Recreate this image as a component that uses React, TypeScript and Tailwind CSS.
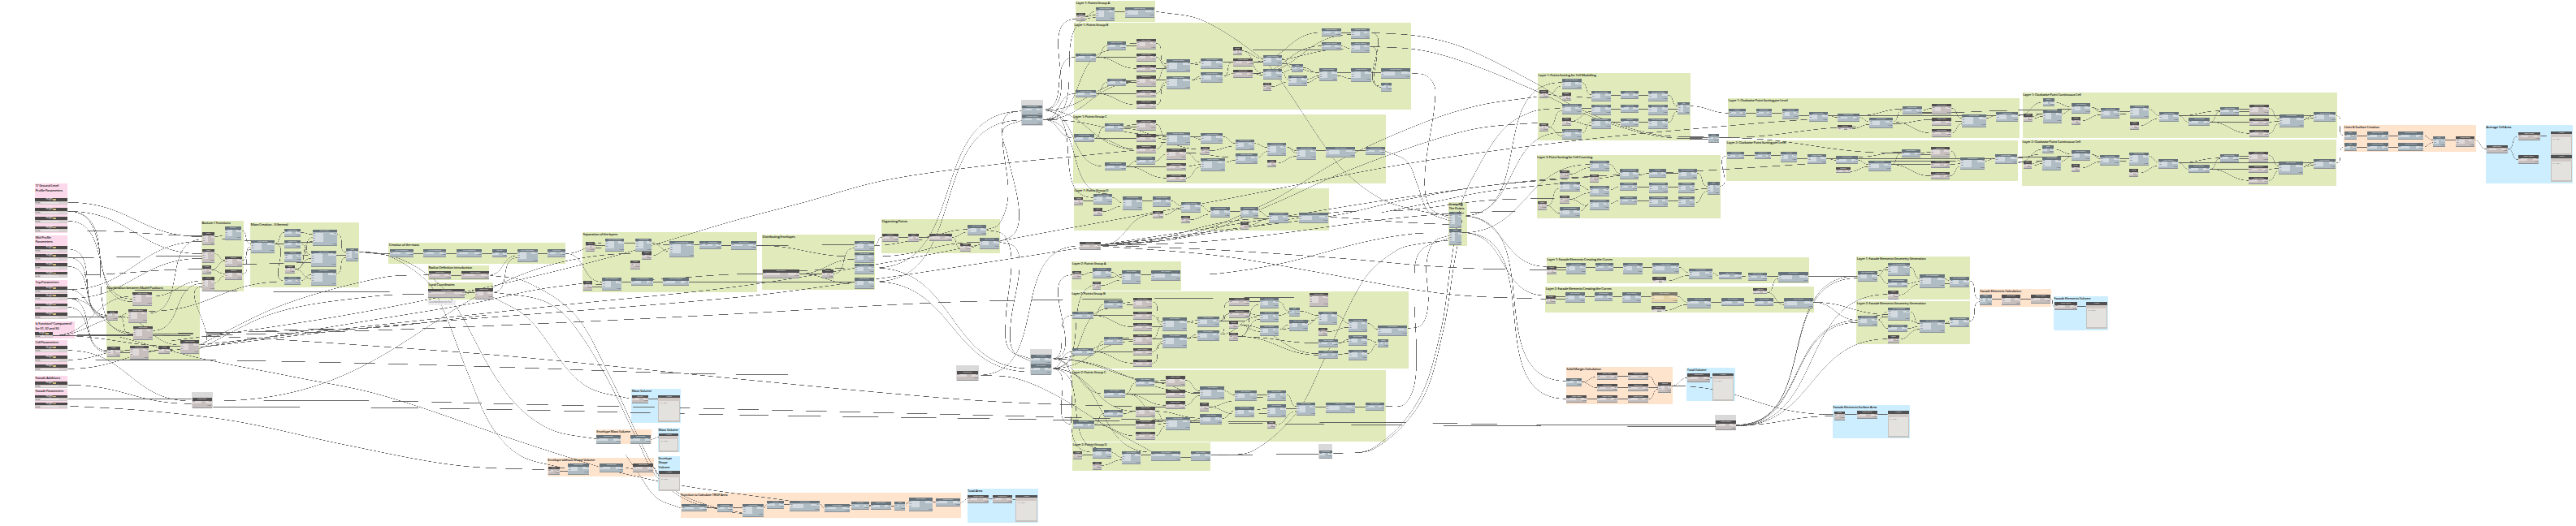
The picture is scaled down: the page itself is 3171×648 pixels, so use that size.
import React from "react";

type Kind = "pink" | "green" | "orange" | "blue" | "gray";
type NodeKind = "s" | "w" | "p" | "o" | "y" | "n";
type Group = [Kind, number, number, number, number, string];
type NodeDef = [NodeKind, number, number, number, number];

interface Section {
  ox: number;
  oy: number;
  sx: number;
  sy: number;
  groups: Group[];
  nodes: NodeDef[];
  wires: number[][];
}

const section = (
  ox: number,
  oy: number,
  sx: number,
  sy: number,
  groups: Group[],
  nodes: NodeDef[],
  wires: number[][],
): Section => ({ ox, oy, sx, sy, groups, nodes, wires });

const sliders = [102, 138, 171, 206, 279, 309, 342, 374, 429, 457, 491, 525, 649, 684, 717, 780, 830, 857];

const sections: Section[] = [
  // Input parameters, profile coordinates and mass control
  section(30, 210, 3, 3,
    [
      ["pink", 39, 49, 121, 183, "'V' Ground Level\nProfile Parameters"],
      ["pink", 39, 240, 121, 157, "Mid Profile\nParameters"],
      ["pink", 39, 404, 121, 144, "Top Parameters"],
      ["pink", 39, 559, 147, 62, "Is Function? Component?\nfor S1, S2 and S3"],
      ["pink", 39, 627, 121, 114, "Cell Parameters"],
      ["pink", 39, 758, 121, 46, "Facade Additions"],
      ["pink", 39, 808, 121, 75, "Facade Parameters"],
      ["green", 654, 186, 156, 260, "Bottom 1 Functions"],
      ["green", 835, 192, 401, 240, "Mass Creation - 3 General"],
      ["green", 302, 427, 346, 275, "Coordination between Model Positions"],
      ["gray", 617, 819, 80, 60, ""],
    ],
    [
      ...sliders.map((y): NodeDef => ["p", 40, y, 118, 23]),
      ["p", 40, 597, 65, 20],
      ["w", 657, 229, 45, 47], ["s", 740, 208, 60, 49], ["w", 657, 291, 45, 50], ["w", 740, 317, 64, 40],
      ["w", 657, 352, 34, 32], ["w", 740, 367, 64, 38], ["w", 657, 394, 46, 52],
      ["s", 837, 257, 86, 48], ["s", 961, 215, 58, 31], ["s", 961, 257, 58, 31], ["s", 961, 300, 61, 38],
      ["w", 963, 350, 36, 31], ["s", 961, 393, 58, 29], ["s", 1064, 219, 90, 60], ["s", 1059, 296, 92, 60],
      ["s", 1059, 367, 92, 60], ["s", 1188, 287, 46, 48],
      ["w", 400, 449, 72, 51], ["w", 383, 513, 71, 50], ["w", 402, 576, 72, 50], ["w", 305, 518, 40, 37],
      ["w", 307, 652, 46, 38], ["w", 390, 648, 69, 51], ["w", 496, 649, 42, 29], ["w", 576, 628, 68, 51],
      ["w", 620, 841, 72, 37],
    ],
    [
      [160, 118, 657, 245], [160, 151, 657, 308], [160, 151, 400, 485], [160, 187, 400, 475], [160, 222, 740, 243],
      [160, 151, 402, 605], [160, 291, 305, 535], [160, 322, 305, 541], [160, 355, 305, 546], [160, 322, 657, 316],
      [160, 387, 657, 365], [160, 440, 657, 262], [160, 440, 305, 535], [160, 473, 657, 325], [160, 473, 307, 665],
      [160, 505, 307, 671], [160, 473, 402, 600], [160, 540, 305, 539], [105, 610, 400, 465], [105, 610, 402, 609],
      [105, 610, 576, 650], [105, 610, 383, 540], [160, 665, 617, 852], [160, 700, 390, 665], [160, 733, 576, 660],
      [160, 793, 617, 862], [160, 844, 617, 844], [345, 540, 383, 528], [345, 540, 390, 605], [345, 540, 576, 645],
      [353, 668, 390, 663], [353, 672, 390, 672], [459, 668, 496, 664], [538, 664, 576, 662], [472, 465, 657, 408],
      [454, 528, 657, 255], [474, 592, 657, 418], [644, 645, 657, 430], [474, 605, 1240, 585], [459, 520, 961, 411],
      [702, 245, 740, 240], [702, 308, 740, 332], [691, 367, 740, 335], [691, 367, 740, 382], [703, 415, 740, 390],
      [800, 222, 837, 271], [804, 332, 837, 282], [804, 382, 837, 292], [702, 252, 837, 259], [804, 346, 1059, 341],
      [923, 271, 961, 229], [923, 271, 961, 270], [923, 271, 961, 408], [923, 271, 1064, 265], [1019, 229, 1064, 236],
      [1019, 270, 1059, 312], [1022, 315, 1064, 248], [999, 365, 1064, 262], [999, 365, 1059, 325], [999, 365, 1059, 400],
      [1022, 315, 1059, 312], [1019, 408, 1059, 385], [1154, 236, 1188, 302], [1151, 312, 1188, 312], [1151, 382, 1188, 322],
    ]),
  // Mass creation and separation of the layers
  section(460, 260, 3, 3,
    [
      ["green", 55, 118, 653, 76, "Creation of the mass"],
      ["green", 201, 201, 225, 53, "Radius Definition introduction"],
      ["green", 201, 264, 240, 62, "Local Coordinates"],
      ["green", 772, 79, 645, 221, "Separation of the layers"],
    ],
    [
      ["s", 60, 141, 87, 29], ["s", 184, 141, 84, 29], ["s", 306, 141, 94, 29], ["s", 438, 142, 54, 30],
      ["s", 530, 141, 76, 49], ["s", 643, 141, 65, 29], ["w", 204, 222, 82, 30], ["w", 325, 222, 100, 31],
      ["w", 201, 288, 136, 32], ["w", 374, 286, 66, 40], ["n", 200, 330, 104, 18],
      ["w", 783, 115, 34, 35], ["s", 855, 101, 70, 49], ["s", 967, 101, 60, 50], ["w", 991, 151, 35, 30],
      ["w", 949, 183, 34, 32], ["s", 1093, 111, 90, 60], ["s", 1203, 111, 80, 31], ["w", 774, 259, 32, 34],
      ["s", 844, 247, 70, 48], ["s", 952, 247, 79, 28], ["s", 1069, 247, 94, 28],
    ],
    [
      [-57, 150, 60, 158], [147, 157, 184, 157], [268, 157, 306, 157], [400, 157, 438, 157], [492, 157, 530, 157],
      [606, 157, 643, 157], [708, 157, 855, 117], [708, 157, 844, 262], [286, 237, 325, 237], [425, 237, 530, 165],
      [337, 300, 374, 300], [337, 307, 374, 294], [440, 300, 530, 173], [817, 127, 855, 127], [817, 137, 855, 135],
      [925, 118, 967, 118], [1027, 120, 1093, 125], [1027, 118, 1093, 150], [1026, 165, 1093, 140], [1183, 125, 1203, 126],
      [1283, 127, 1320, 127], [806, 273, 844, 271], [806, 281, 844, 281], [914, 262, 952, 262], [1031, 262, 1069, 262],
      [1163, 262, 1776, 261], [914, 255, 1437, 232],
    ]),
  // Volume and area calculations
  section(640, 440, 2.376, 3,
    [
      ["blue", 326, 118, 144, 125, "Mass Volume"],
      ["orange", 223, 267, 162, 54, "Envelope Mass Volume"],
      ["blue", 404, 260, 64, 90, "Mass Volume"],
      ["orange", 80, 373, 313, 68, "Envelope without Shape Volume"],
      ["blue", 404, 366, 64, 130, "Envelope\nShape\nVolume"],
      ["orange", 470, 500, 820, 95, "Function to Calculate TROF Area"],
      ["blue", 1308, 487, 208, 124, "Total Area"],
    ],
    [
      ["w", 328, 140, 47, 30], ["o", 404, 140, 64, 100], ["s", 223, 289, 72, 31], ["s", 323, 289, 60, 31],
      ["o", 406, 282, 58, 68], ["w", 82, 405, 34, 31], ["s", 141, 394, 61, 40], ["s", 233, 394, 69, 31],
      ["w", 331, 394, 59, 32], ["o", 406, 421, 61, 73], ["s", 474, 543, 73, 28], ["s", 577, 543, 45, 29],
      ["s", 652, 542, 60, 48], ["s", 723, 530, 49, 30], ["s", 790, 531, 86, 40], ["s", 891, 543, 74, 30],
      ["s", 970, 534, 51, 30], ["s", 1026, 535, 59, 28], ["s", 1096, 534, 31, 33], ["s", 1137, 520, 71, 51],
      ["s", 1216, 521, 72, 32], ["w", 1310, 510, 62, 30], ["w", 1382, 510, 59, 30], ["o", 1450, 510, 63, 99],
    ],
    [
      [375, 154, 404, 155], [383, 304, 406, 296], [116, 410, 141, 408], [116, 420, 141, 420], [302, 408, 331, 412],
      [390, 408, 406, 436], [547, 557, 577, 556], [622, 556, 652, 556], [547, 557, 652, 577], [712, 557, 723, 545],
      [772, 545, 790, 546], [876, 543, 970, 548], [876, 543, 891, 558], [965, 558, 1026, 550], [1021, 548, 1026, 549],
      [1085, 549, 1096, 549], [1127, 549, 1137, 535], [1085, 543, 1137, 546], [1208, 536, 1216, 536], [1288, 538, 1310, 524],
      [1372, 524, 1382, 524], [1441, 525, 1450, 524],
    ]),
  // Envelope scheduling and point organisation
  section(880, 250, 3, 3,
    [
      ["green", 174, 118, 418, 202, "Distributing Envelopes"],
      ["green", 615, 60, 438, 126, "Organizing Points"],
      ["gray", 891, 600, 83, 57, ""],
      ["gray", 1164, 540, 80, 94, ""],
    ],
    [
      ["s", -37, 141, 59, 30], ["s", 60, 141, 92, 32], ["w", 177, 247, 134, 31], ["w", 397, 247, 40, 32],
      ["s", 515, 140, 73, 38], ["s", 515, 183, 73, 38], ["s", 515, 225, 73, 38], ["s", 515, 277, 73, 40],
      ["w", 617, 113, 61, 30], ["w", 714, 113, 39, 30], ["w", 791, 113, 84, 29], ["s", 933, 82, 69, 38],
      ["w", 906, 149, 39, 30], ["s", 978, 130, 72, 40], ["w", 893, 622, 80, 34], ["s", 1166, 560, 74, 36], ["s", 1166, 597, 74, 38],
    ],
    [
      [22, 157, 60, 157], [152, 157, 515, 155], [152, 157, 515, 198], [311, 262, 397, 262], [437, 262, 515, 167],
      [311, 262, 515, 208], [311, 250, 515, 240], [311, 262, 515, 300], [588, 157, 617, 127], [588, 157, 791, 135],
      [678, 127, 714, 127], [753, 127, 791, 127], [753, 127, 933, 98], [875, 127, 933, 108], [875, 127, 906, 165],
      [945, 165, 978, 155], [588, 198, 978, 145],
    ]),
  // Layer 1 point groups
  section(1230, 0, 3, 3,
    [
      ["green", 282, 4, 294, 77, "Layer 1: Points Group A"],
      ["green", 276, 84, 1246, 321, "Layer 1: Points Group B"],
      ["green", 272, 422, 1157, 256, "Layer 1: Points Group C"],
      ["green", 276, 696, 941, 155, "Layer 1: Points Group D"],
      ["gray", 81, 370, 80, 94, ""],
    ],
    [
      ["w", 286, 48, 31, 31], ["s", 356, 27, 70, 50], ["s", 464, 27, 108, 38],
      ["s", 84, 390, 75, 36], ["s", 84, 426, 75, 37],
      ["s", 281, 197, 77, 30], ["s", 398, 154, 69, 31], ["w", 507, 144, 71, 40], ["w", 507, 197, 71, 30], ["w", 507, 239, 71, 29],
      ["s", 281, 332, 77, 29], ["s", 398, 290, 69, 29], ["w", 507, 280, 71, 40], ["w", 507, 332, 71, 29], ["w", 507, 373, 71, 29],
      ["s", 617, 220, 89, 47], ["s", 617, 281, 89, 49], ["s", 745, 215, 81, 39], ["s", 745, 267, 81, 38],
      ["w", 863, 175, 33, 30], ["w", 863, 216, 74, 29], ["w", 863, 258, 74, 29], ["s", 974, 203, 69, 39], ["s", 974, 254, 69, 39],
      ["w", 974, 306, 31, 29], ["s", 1081, 237, 40, 31], ["s", 1067, 278, 69, 39], ["s", 1182, 253, 66, 48],
      ["s", 1190, 105, 72, 31], ["s", 1190, 156, 72, 31], ["s", 1300, 105, 68, 39], ["s", 1300, 156, 68, 39],
      ["s", 1300, 253, 73, 49], ["s", 1410, 253, 108, 39], ["s", 1410, 305, 40, 33],
      ["s", 275, 496, 77, 29], ["s", 389, 455, 71, 30], ["w", 507, 444, 71, 38], ["w", 507, 496, 71, 29], ["w", 507, 538, 71, 28],
      ["s", 389, 601, 79, 29], ["s", 507, 580, 69, 28], ["w", 617, 550, 72, 40], ["w", 617, 602, 72, 28], ["w", 617, 644, 72, 28],
      ["s", 617, 489, 89, 47], ["s", 745, 491, 81, 39], ["w", 745, 543, 32, 29], ["s", 745, 585, 89, 49],
      ["s", 872, 516, 70, 39], ["s", 872, 567, 81, 39], ["s", 990, 528, 69, 49], ["w", 990, 590, 33, 29],
      ["s", 1099, 543, 70, 47], ["s", 1207, 543, 107, 39], ["s", 1353, 543, 72, 29],
      ["w", 277, 728, 33, 31], ["s", 348, 716, 69, 39], ["w", 348, 769, 33, 29], ["s", 456, 727, 71, 49], ["s", 566, 727, 68, 37],
      ["w", 566, 779, 39, 28], ["s", 672, 746, 71, 39], ["w", 672, 798, 33, 28], ["s", 781, 766, 70, 38], ["s", 890, 766, 67, 38],
      ["w", 890, 820, 32, 28], ["s", 996, 786, 72, 38], ["s", 1106, 786, 108, 38], ["w", 298, 894, 76, 30],
    ],
    [
      [317, 60, 356, 42], [317, 62, 356, 55], [426, 42, 464, 42],
      [161, 405, 286, 70], [161, 405, 281, 211], [161, 408, 507, 300], [161, 442, 281, 346], [161, 442, 507, 305],
      [161, 442, 426, 185], [161, 442, 356, 65], [161, 442, 275, 510], [161, 442, 617, 500], [161, 405, 507, 552], [161, 408, 389, 615],
      [161, 408, 348, 730], [161, 442, 398, 716],
      [358, 211, 398, 170], [358, 211, 507, 211], [358, 211, 507, 253], [467, 162, 507, 160], [467, 170, 507, 170],
      [358, 346, 398, 305], [358, 346, 507, 346], [358, 346, 507, 387], [467, 297, 507, 296], [467, 304, 507, 303],
      [578, 160, 617, 236], [578, 211, 617, 245], [578, 253, 617, 253], [578, 296, 617, 250], [578, 296, 617, 296],
      [578, 346, 617, 305], [578, 387, 617, 315], [706, 236, 745, 230], [706, 236, 745, 240], [706, 297, 745, 282], [706, 297, 745, 290],
      [826, 230, 863, 230], [826, 282, 863, 272], [826, 282, 863, 230], [896, 188, 974, 217], [896, 188, 974, 270], [937, 230, 974, 225],
      [937, 230, 1300, 180], [937, 230, 1190, 120], [937, 272, 974, 278], [937, 272, 1190, 170], [937, 272, 1300, 128],
      [937, 185, 1190, 184], [1005, 320, 1067, 303], [1043, 217, 1081, 250], [1043, 268, 1081, 257], [1043, 235, 1182, 268],
      [1043, 268, 1067, 292], [1121, 250, 1182, 270], [1136, 292, 1182, 280], [1136, 305, 1182, 287], [1248, 268, 1300, 268], [1248, 280, 1300, 290],
      [1262, 120, 1300, 120], [1262, 170, 1300, 180], [1368, 120, 1410, 318], [1368, 172, 1410, 322], [1373, 268, 1410, 268],
      [352, 510, 389, 470], [352, 510, 507, 510], [352, 510, 507, 552], [460, 465, 507, 460], [460, 470, 507, 469],
      [460, 475, 617, 505], [578, 460, 617, 505], [578, 510, 617, 515], [578, 552, 617, 525], [468, 615, 507, 595], [468, 615, 617, 615],
      [468, 615, 617, 658], [576, 595, 617, 570], [578, 525, 745, 552], [706, 505, 745, 505], [706, 505, 745, 515], [689, 565, 745, 600],
      [689, 615, 745, 608], [689, 658, 745, 617], [689, 565, 872, 582], [777, 557, 872, 540], [826, 505, 872, 530], [834, 600, 872, 592],
      [942, 530, 990, 545], [953, 582, 990, 560], [1059, 543, 1099, 565], [1023, 603, 1099, 577], [1059, 543, 1099, 557],
      [1169, 557, 1207, 557], [1314, 557, 1353, 557],
      [310, 742, 348, 742], [417, 730, 456, 750], [381, 782, 456, 762], [527, 742, 566, 742], [634, 742, 672, 760], [605, 795, 672, 772],
      [743, 760, 781, 782], [705, 812, 781, 792], [851, 780, 890, 780], [957, 780, 996, 800], [922, 832, 996, 808], [1068, 800, 1106, 800],
      [374, 907, 566, 794], [374, 907, 996, 808],
    ]),
  // Layer 2 point groups
  section(1230, 290, 3, 3,
    [
      ["green", 268, 96, 405, 108, "Layer 2: Points Group A"],
      ["green", 266, 207, 1245, 284, "Layer 2: Points Group B"],
      ["green", 268, 498, 1159, 263, "Layer 2: Points Group C"],
      ["green", 270, 765, 511, 105, "Layer 2: Points Group D"],
      ["gray", 114, 420, 79, 94, ""],
      ["gray", 1179, 771, 52, 55, ""],
    ],
    [
      ["s", 117, 442, 74, 36], ["s", 117, 478, 74, 37],
      ["w", 271, 132, 32, 29], ["s", 344, 121, 69, 39], ["w", 344, 171, 32, 29], ["s", 453, 130, 70, 49], ["s", 562, 130, 107, 38],
      ["s", 270, 282, 77, 28], ["s", 387, 240, 69, 31], ["w", 494, 231, 71, 39], ["w", 494, 282, 71, 29], ["w", 494, 324, 71, 29],
      ["s", 270, 416, 77, 29], ["s", 387, 375, 69, 29], ["w", 494, 366, 71, 39], ["w", 494, 417, 71, 28], ["w", 494, 459, 71, 27],
      ["s", 604, 304, 89, 49], ["s", 604, 367, 89, 49], ["s", 731, 300, 81, 38], ["s", 731, 351, 81, 39],
      ["w", 850, 231, 74, 29], ["w", 850, 276, 74, 30], ["w", 850, 317, 32, 29], ["w", 850, 360, 32, 29],
      ["s", 963, 231, 68, 38], ["s", 963, 282, 68, 38], ["s", 963, 333, 68, 38], ["s", 1071, 267, 39, 32], ["s", 1071, 313, 68, 40],
      ["w", 1145, 213, 71, 50], ["s", 1180, 281, 68, 49], ["w", 1180, 342, 31, 30], ["s", 1180, 384, 71, 29], ["s", 1180, 426, 71, 29],
      ["s", 1291, 309, 69, 49], ["s", 1291, 370, 68, 39], ["s", 1291, 422, 68, 39], ["s", 1399, 333, 107, 38], ["s", 1399, 384, 39, 31],
      ["s", 387, 571, 79, 30], ["s", 505, 529, 69, 30], ["w", 615, 520, 71, 39], ["w", 615, 571, 71, 29], ["w", 615, 613, 71, 29],
      ["s", 387, 644, 70, 29], ["w", 505, 634, 71, 38], ["w", 505, 685, 71, 28], ["w", 505, 726, 71, 29], ["s", 272, 685, 78, 28],
      ["s", 615, 672, 90, 47], ["s", 742, 559, 90, 48], ["w", 742, 619, 32, 31], ["s", 742, 661, 81, 39],
      ["s", 870, 573, 80, 38], ["s", 870, 634, 71, 38], ["s", 989, 573, 69, 38], ["s", 989, 625, 69, 48], ["w", 989, 686, 31, 29],
      ["s", 1098, 618, 70, 48], ["s", 1206, 618, 108, 38], ["s", 1353, 618, 70, 29],
      ["w", 274, 798, 33, 29], ["s", 345, 787, 70, 39], ["w", 345, 837, 33, 29], ["s", 453, 797, 70, 49], ["s", 562, 797, 108, 37],
      ["s", 709, 797, 71, 37], ["s", 1181, 794, 48, 30],
    ],
    [
      [191, 456, 270, 296], [191, 456, 271, 146], [191, 456, 494, 384], [191, 456, 615, 540], [191, 456, 387, 585], [191, 456, 345, 801],
      [191, 492, 270, 430], [191, 492, 413, 270], [191, 492, 376, 180], [191, 492, 272, 699], [191, 492, 494, 392], [191, 492, 505, 650],
      [191, 456, 742, 580], [191, 492, 562, 801], [191, 492, 376, 787],
      [303, 146, 344, 136], [413, 136, 453, 155], [376, 185, 453, 165], [413, 155, 453, 145], [523, 145, 562, 145],
      [347, 296, 387, 255], [347, 296, 494, 296], [347, 296, 494, 338], [456, 250, 494, 246], [456, 258, 494, 256],
      [347, 430, 387, 390], [347, 430, 494, 430], [347, 430, 494, 472], [456, 380, 494, 378], [456, 385, 494, 386],
      [565, 246, 604, 320], [565, 296, 604, 330], [565, 338, 604, 337], [565, 381, 604, 335], [565, 381, 604, 380], [565, 430, 604, 392],
      [565, 472, 604, 400], [693, 320, 731, 314], [693, 320, 731, 325], [693, 380, 731, 366], [693, 380, 731, 376],
      [812, 316, 850, 245], [812, 316, 850, 290], [812, 366, 850, 290], [812, 316, 963, 318], [812, 366, 963, 300],
      [924, 245, 963, 245], [924, 290, 963, 296], [882, 330, 963, 355], [882, 374, 963, 255], [882, 374, 963, 310],
      [882, 330, 1180, 437], [882, 374, 1180, 398], [882, 374, 1180, 442], [1031, 245, 1071, 280], [1031, 296, 1071, 287],
      [1031, 348, 1071, 330], [1110, 280, 1180, 296], [1139, 328, 1180, 305], [1031, 348, 1180, 312], [1211, 356, 1291, 340],
      [1248, 296, 1291, 325], [1251, 398, 1291, 385], [1251, 440, 1291, 436], [1251, 398, 1291, 392], [1360, 325, 1399, 347],
      [1359, 385, 1399, 396], [1359, 437, 1399, 402],
      [466, 585, 505, 545], [466, 585, 615, 628], [466, 585, 615, 585], [574, 538, 615, 535], [574, 545, 615, 545],
      [574, 545, 742, 585], [686, 535, 742, 575], [686, 585, 742, 583], [686, 628, 742, 592], [466, 585, 615, 690],
      [350, 699, 387, 659], [350, 699, 505, 699], [350, 699, 505, 741], [457, 659, 505, 650], [576, 650, 615, 688], [576, 699, 615, 695],
      [576, 741, 615, 705], [576, 650, 742, 675], [705, 688, 742, 676], [774, 634, 870, 612], [774, 634, 870, 660], [832, 575, 870, 590],
      [823, 677, 870, 648], [950, 588, 989, 588], [950, 598, 989, 600], [941, 645, 989, 640], [941, 660, 989, 658], [1058, 588, 1098, 632],
      [1058, 640, 1098, 640], [1020, 700, 1098, 650], [1168, 634, 1206, 634], [1314, 634, 1353, 634],
      [307, 812, 345, 811], [415, 803, 453, 820], [378, 850, 453, 830], [523, 812, 562, 812], [670, 820, 709, 820],
    ]),
  // Cell modelling and counting
  section(1730, 60, 3, 3,
    [
      ["green", 489, 90, 565, 250, "Layer 1: Points Sorting for Cell Modelling"],
      ["green", 485, 392, 679, 235, "Layer 2: Point Sorting for Cell Counting"],
      ["green", 159, 567, 69, 162, "Grouping\nThe Points"],
    ],
    [
      ["s", 161, 603, 47, 60], ["s", 161, 667, 47, 58],
      ["w", 494, 154, 33, 30], ["w", 494, 275, 33, 31], ["s", 578, 112, 72, 38], ["w", 578, 163, 33, 29], ["s", 578, 204, 72, 38],
      ["w", 578, 256, 33, 29], ["s", 578, 297, 72, 38], ["s", 687, 155, 72, 39], ["s", 687, 206, 72, 39], ["s", 687, 257, 72, 39],
      ["s", 796, 155, 64, 31], ["s", 796, 206, 64, 31], ["s", 796, 257, 64, 31], ["s", 898, 155, 71, 39], ["s", 898, 206, 71, 39],
      ["s", 898, 257, 71, 39], ["s", 1006, 197, 44, 47], ["s", 1118, 315, 40, 32],
      ["w", 571, 450, 34, 29], ["w", 488, 564, 33, 32], ["s", 681, 414, 73, 38], ["w", 681, 465, 34, 29], ["s", 571, 491, 73, 38],
      ["w", 571, 543, 34, 29], ["s", 571, 586, 73, 38], ["s", 681, 507, 71, 38], ["s", 681, 558, 71, 38],
      ["s", 792, 445, 70, 38], ["s", 792, 495, 64, 31], ["s", 792, 546, 64, 29], ["s", 900, 445, 63, 31], ["s", 900, 495, 70, 39],
      ["s", 900, 546, 70, 38], ["s", 1008, 445, 68, 38], ["s", 1008, 495, 61, 38], ["s", 1008, 546, 61, 38], ["s", 1115, 493, 45, 48],
    ],
    [
      [208, 618, 578, 125], [208, 618, 578, 310], [208, 618, 521, 805], [208, 618, 595, 1228], [208, 680, 681, 428],
      [208, 680, 517, 912], [208, 680, 595, 1294],
      [527, 170, 578, 138], [527, 170, 578, 175], [527, 290, 578, 230], [527, 290, 578, 322], [611, 177, 687, 181],
      [611, 268, 687, 232], [611, 268, 687, 283], [650, 125, 687, 170], [650, 220, 687, 220], [650, 312, 687, 272],
      [759, 172, 796, 172], [759, 222, 796, 222], [759, 272, 796, 272], [860, 172, 898, 172], [860, 222, 898, 222], [860, 272, 898, 272],
      [969, 172, 1006, 212], [969, 222, 1006, 222], [969, 272, 1006, 232], [1050, 212, 1194, 238], [1050, 328, 1118, 328], [1050, 334, 1118, 334],
      [605, 464, 681, 440], [521, 580, 571, 516], [521, 580, 571, 608], [605, 556, 681, 533], [605, 556, 681, 582], [715, 478, 792, 470],
      [644, 506, 681, 522], [644, 600, 681, 573], [754, 428, 792, 460], [752, 522, 792, 510], [752, 573, 792, 561], [862, 467, 900, 460],
      [963, 460, 1008, 460], [856, 511, 900, 511], [856, 562, 900, 562], [970, 511, 1008, 511], [970, 562, 1008, 562],
      [1076, 460, 1115, 508], [1069, 520, 1115, 517], [1069, 570, 1115, 527], [1160, 508, 1188, 396],
    ]),
  // Continuous sorting per level
  section(2100, 100, 3, 3,
    [
      ["green", 81, 63, 1077, 146, "Layer 1: Clockwise Point Sorting per Level"],
      ["green", 75, 220, 1077, 149, "Layer 2: Clockwise Point Sorting per Level"],
    ],
    [
      ["s", 83, 102, 63, 29], ["s", 185, 102, 58, 29], ["s", 281, 102, 62, 38], ["s", 381, 113, 68, 38], ["s", 487, 120, 79, 29],
      ["w", 487, 162, 52, 18], ["s", 604, 135, 85, 38], ["s", 726, 93, 71, 31], ["w", 835, 84, 71, 40], ["w", 835, 136, 71, 29],
      ["w", 835, 177, 71, 29], ["s", 945, 122, 89, 48], ["s", 1072, 113, 81, 38],
      ["s", 79, 261, 63, 28], ["s", 181, 261, 58, 28], ["s", 277, 261, 59, 38], ["s", 376, 269, 68, 38], ["s", 481, 277, 81, 28],
      ["w", 481, 318, 52, 22], ["s", 599, 294, 84, 38], ["s", 722, 253, 70, 28], ["w", 830, 242, 71, 39], ["w", 830, 294, 71, 28],
      ["w", 830, 336, 71, 26], ["s", 940, 281, 90, 47], ["s", 1068, 269, 81, 38],
    ],
    [
      [146, 118, 185, 118], [243, 118, 281, 118], [343, 127, 381, 127], [449, 127, 487, 134], [449, 127, 1072, 127], [566, 134, 604, 150],
      [539, 176, 604, 160], [566, 127, 726, 103], [689, 150, 726, 108], [689, 150, 835, 192], [689, 158, 835, 142], [797, 108, 835, 100],
      [797, 115, 835, 115], [797, 118, 1180, 108], [906, 100, 945, 137], [906, 150, 945, 148], [906, 192, 945, 158], [1034, 137, 1072, 127],
      [48, 209, 726, 266], [48, 209, 604, 168], [142, 275, 181, 275], [239, 275, 277, 275], [336, 286, 376, 286], [444, 286, 481, 292],
      [444, 286, 1068, 286], [562, 292, 599, 308], [533, 334, 599, 316], [562, 280, 722, 262], [683, 308, 722, 266], [683, 308, 830, 308],
      [683, 308, 830, 350], [792, 266, 830, 262], [792, 272, 830, 272], [901, 258, 940, 295], [901, 308, 940, 305], [901, 350, 940, 315],
      [1030, 295, 1068, 286], [1149, 284, 1240, 270], [683, 296, 1068, 294],
    ]),
  // Continuous cell points
  section(2470, 100, 3, 3,
    [
      ["green", 59, 42, 1162, 168, "Layer 1: Clockwise Point Continuous Cell"],
      ["green", 57, 216, 1161, 170, "Layer 2: Clockwise Point Continuous Cell"],
    ],
    [0, 174].flatMap((dy): NodeDef[] => {
      const dx = dy ? -2 : 0;
      return [
        ["s", 134 + dx, 64 + dy, 42, 30], ["w", 64 + dx, 121 + dy, 32, 30], ["s", 134 + dx, 106 + dy, 69, 49], ["s", 241 + dx, 82 + dy, 69, 39],
        ["w", 241 + dx, 133 + dy, 32, 30], ["s", 348 + dx, 99 + dy, 70, 38], ["s", 456 + dx, 89 + dy, 70, 49], ["w", 456 + dx, 151 + dy, 33, 30],
        ["s", 564 + dx, 113 + dy, 71, 38], ["s", 673 + dx, 136 + dy, 78, 29], ["s", 790 + dx, 95 + dy, 69, 30], ["w", 897 + dx, 86 + dy, 72, 39],
        ["w", 897 + dx, 138 + dy, 72, 27], ["w", 897 + dx, 179 + dy, 72, 27], ["s", 1007 + dx, 124 + dy, 90, 48], ["s", 1135 + dx, 113 + dy, 81, 38],
      ];
    }),
    [0, 174].flatMap((dy) =>
      [
        [43, 127, 134, 78], [43, 107, 241, 104], [96, 130, 134, 120], [96, 138, 134, 130], [43, 125, 134, 122], [176, 78, 241, 96],
        [203, 121, 241, 104], [273, 147, 348, 124], [310, 96, 348, 113], [310, 96, 348, 105], [418, 113, 456, 112], [418, 122, 456, 120],
        [489, 165, 564, 138], [526, 104, 564, 127], [635, 128, 1135, 128], [635, 128, 673, 151], [635, 128, 790, 110], [751, 151, 790, 112],
        [751, 151, 897, 151], [751, 151, 897, 193], [859, 102, 897, 101], [859, 112, 897, 112], [969, 101, 1007, 140], [969, 151, 1007, 148],
        [969, 193, 1007, 158], [1097, 138, 1135, 128], [1097, 142, 1135, 136],
      ].map(([a, b, c, d]) => [a, b + dy, c, d + dy]))),
  // Surface creation and average cell area
  section(2860, 130, 3, 3,
    [
      ["orange", 75, 73, 488, 98, "Lines & Surface Creation"],
      ["blue", 599, 73, 322, 214, "Average Cell Area"],
    ],
    [
      ["s", 77, 97, 45, 28], ["s", 162, 97, 77, 28], ["s", 276, 97, 93, 28], ["s", 77, 139, 45, 28], ["s", 162, 139, 77, 28],
      ["s", 276, 139, 93, 28], ["s", 406, 114, 43, 39], ["w", 490, 114, 68, 39], ["w", 602, 147, 79, 29], ["w", 719, 99, 82, 31],
      ["w", 719, 184, 77, 31], ["o", 839, 96, 80, 87], ["o", 839, 184, 80, 98],
    ],
    [
      [48, 38, 77, 111], [48, 212, 77, 153], [122, 111, 162, 111], [239, 111, 276, 111], [122, 153, 162, 153], [239, 153, 276, 153],
      [369, 111, 406, 128], [369, 153, 406, 137], [449, 128, 490, 128], [558, 128, 602, 161], [681, 161, 719, 114], [681, 161, 719, 200], [801, 113, 839, 111],
    ]),
  // Facade elements: curves and module lengths
  section(1860, 300, 3, 3,
    [
      ["green", 131, 51, 969, 96, "Layer 1: Facade Elements Creating the Curves"],
      ["green", 127, 159, 992, 96, "Layer 2: Facade Elements Creating the Curves"],
      ["orange", 203, 457, 393, 137, "Solid Margin Calculation"],
      ["blue", 649, 458, 178, 124, "Total Volume"],
      ["gray", 754, 634, 77, 57, ""],
    ],
    [
      ["w", 133, 85, 34, 30], ["s", 205, 72, 71, 41], ["s", 313, 72, 65, 30], ["s", 415, 72, 70, 41], ["s", 523, 72, 97, 40],
      ["w", 523, 124, 51, 19], ["s", 658, 93, 85, 38], ["s", 768, 104, 83, 29], ["s", 876, 108, 70, 31], ["s", 988, 106, 109, 38],
      ["w", 895, 164, 51, 22], ["w", 129, 193, 35, 29], ["s", 201, 181, 71, 39], ["s", 309, 181, 65, 31], ["s", 410, 181, 70, 39],
      ["y", 518, 181, 97, 38], ["w", 518, 232, 51, 19], ["s", 652, 202, 87, 37], ["s", 777, 202, 84, 29], ["s", 900, 202, 70, 29],
      ["s", 1008, 202, 107, 38],
      ["s", 205, 497, 56, 32], ["w", 205, 560, 75, 28], ["w", 318, 477, 74, 27], ["w", 318, 519, 74, 27], ["w", 318, 560, 74, 27],
      ["w", 432, 477, 76, 27], ["w", 432, 519, 76, 27], ["w", 432, 560, 76, 27], ["w", 544, 514, 48, 38],
      ["w", 652, 481, 83, 31], ["o", 743, 479, 80, 102], ["w", 757, 655, 73, 36],
    ],
    [
      [167, 97, 205, 97], [167, 88, 205, 88], [276, 88, 313, 88], [378, 88, 415, 88], [485, 88, 523, 88], [620, 88, 658, 108],
      [574, 138, 658, 118], [743, 108, 768, 120], [851, 121, 876, 123], [946, 121, 988, 121], [946, 181, 988, 130], [946, 181, 1008, 226],
      [164, 196, 201, 196], [164, 205, 201, 205], [272, 196, 309, 196], [374, 196, 410, 196], [480, 196, 518, 196], [615, 196, 652, 217],
      [569, 247, 652, 226], [739, 217, 777, 217], [861, 217, 900, 217], [970, 217, 1008, 217], [1097, 121, 1280, 121], [1115, 217, 1280, 283],
      [1115, 217, 1392, 262], [261, 512, 318, 492], [261, 512, 318, 533], [280, 575, 318, 575], [392, 491, 432, 491], [392, 533, 432, 533],
      [392, 575, 432, 575], [508, 491, 544, 526], [508, 533, 544, 532], [508, 575, 544, 538], [592, 526, 652, 496], [735, 496, 743, 496],
      [592, 526, 1190, 632], [830, 672, 1190, 638], [830, 670, 1280, 120], [830, 672, 1280, 128], [830, 674, 1390, 188],
      [830, 670, 1280, 285], [830, 674, 1280, 292], [830, 675, 1390, 353],
    ]),
  // Facade elements: geometry and area
  section(2230, 300, 3, 3,
    [
      ["green", 166, 48, 419, 159, "Layer 1: Facade Elements Geometry Generation"],
      ["green", 166, 213, 419, 159, "Layer 2: Facade Elements Geometry Generation"],
      ["orange", 620, 168, 265, 66, "Facade Elements Calculation"],
      ["blue", 894, 195, 201, 125, "Facade Elements Volume"],
      ["blue", 78, 597, 285, 124, "Facade Elements Surface Area"],
    ],
    [
      ["s", 171, 103, 72, 38], ["s", 282, 72, 80, 49], ["s", 282, 133, 72, 30], ["w", 282, 175, 39, 31], ["s", 400, 115, 91, 49],
      ["s", 511, 124, 70, 39], ["s", 171, 267, 72, 39], ["s", 282, 237, 80, 48], ["s", 282, 299, 72, 29], ["w", 282, 340, 41, 28],
      ["s", 400, 282, 91, 49], ["s", 511, 272, 70, 38], ["s", 622, 190, 43, 39], ["w", 703, 190, 68, 39], ["w", 810, 190, 72, 31],
      ["w", 898, 217, 82, 30], ["o", 1013, 217, 79, 99], ["w", 83, 621, 40, 32], ["w", 167, 619, 75, 29], ["o", 281, 619, 79, 99],
    ],
    [
      [225, 103, 282, 98], [243, 118, 282, 88], [243, 118, 282, 148], [354, 148, 400, 140], [362, 88, 400, 130], [321, 190, 400, 150],
      [491, 130, 511, 138], [491, 148, 511, 148], [581, 138, 622, 205], [225, 267, 282, 262], [243, 282, 282, 252], [243, 282, 282, 314],
      [243, 270, 282, 272], [354, 314, 400, 306], [362, 252, 400, 296], [323, 354, 400, 316], [491, 296, 511, 288], [491, 296, 511, 296],
      [362, 285, 400, 296], [581, 287, 622, 215], [665, 205, 703, 205], [771, 205, 810, 205], [882, 205, 898, 232], [980, 232, 1013, 232],
      [123, 632, 167, 632], [242, 632, 281, 632],
    ]),
];

// Connectors that cross several regions of the canvas
const longWires: number[][] = [
  [83, 357, 200, 357.4, 310, 359, 527, 360],
  [65, 413, 150, 413, 245, 410, 350, 408, 470, 403, 600, 388],
  [147, 415, 245, 441, 360, 464, 470, 487, 640, 544, 737, 575, 766, 583, 838, 598, 972, 617],
  [83, 500, 180, 506, 290, 519, 425, 548, 560, 573, 674, 579],
  [245, 425, 350, 375, 470, 342, 528, 338.5],
  [245, 430, 340, 385, 460, 365, 527, 362],
  [210, 420, 340, 402, 460, 382, 603, 353, 720, 325, 800, 303, 900, 273, 987, 250, 1090, 222, 1230, 202, 1320, 193, 1398, 185],
  [245, 428, 350, 412, 460, 394, 580, 374, 660, 357, 718, 349],
  [262, 494, 790, 312],
  [245, 425, 460, 401, 700, 375, 900, 354, 1077, 326, 1230, 297, 1500, 247, 1730, 202, 1950, 172, 2150, 153, 2227, 147],
  [245, 428, 460, 403, 900, 367, 1077, 344, 1320, 307, 1560, 270, 1730, 243, 1893, 222, 2100, 210, 2225, 202],
  [65, 413, 243, 413, 460, 407, 680, 398, 900, 387, 1150, 373, 1320, 369, 1513, 367, 1612, 366],
  [65, 412, 190, 413, 300, 416, 470, 427, 640, 440, 900, 466, 1100, 485, 1230, 495, 1400, 501, 1477, 502],
  [83, 444, 240, 443.5, 470, 448, 640, 453, 842, 460, 1000, 462, 1177, 462],
  [262, 493, 470, 494, 640, 498, 900, 504, 1230, 512, 1500, 519, 1750, 521, 1860, 523, 2112, 523.6],
  [262, 501.6, 470, 502.3, 640, 505, 900, 511, 1230, 516, 1500, 521, 1750, 524, 2112, 525.6],
  [441, 310, 480, 316, 525, 346, 543, 375, 576, 460, 605, 525, 640, 561, 690, 576],
  [441, 310, 490, 318, 535, 345, 560, 375, 607, 460, 640, 503, 680, 530, 735, 541],
  [607, 366, 650, 392, 703, 460, 730, 480, 775, 491],
  [602, 339, 647, 347, 707, 387, 749, 460, 788, 543, 812, 587, 840, 610, 882, 626],
  [607, 360, 667, 370, 700, 393, 744, 460, 785, 543, 808, 587, 850, 618, 914, 632],
  [770, 560, 785, 582, 808, 613, 838, 626],
  [1076, 330, 1258, 137],
  [1076, 347, 1258, 148],
  [1076, 330, 1268, 454],
  [1076, 347, 1268, 458],
  [1214, 283, 1230, 276, 1241, 240, 1234, 170, 1238, 143, 1258, 136],
  [1230, 298, 1250, 286, 1254, 255, 1240, 190, 1235, 160, 1258, 148],
  [1214, 283, 1236, 290, 1245, 320, 1238, 395, 1242, 430, 1268, 442],
  [1230, 298, 1250, 305, 1255, 330, 1244, 400, 1247, 432, 1268, 445],
  [1205, 462, 1329, 303],
  [1205, 462, 1250, 466, 1300, 487, 1370, 530, 1417, 556],
  [1422, 14, 1480, 25, 1553, 72, 1577, 100, 1632, 182, 1657, 213, 1700, 245, 1740, 258, 1784, 266],
  [1737, 90, 1757, 94, 1767, 113, 1754, 215, 1760, 255, 1784, 269],
  [1705, 186, 1732, 199, 1745, 228, 1758, 260, 1784, 272],
  [1635, 267, 1690, 271, 1730, 274, 1784, 276.6],
  [1686, 40, 1750, 45, 1805, 60, 1895, 105, 1930, 127, 1983, 150, 2040, 166, 2102, 169],
  [1686, 57, 1750, 62, 1810, 79, 1893, 113, 1945, 138, 2000, 158, 2050, 169, 2102, 171],
  [1355, 302, 1450, 293, 1560, 250, 1650, 197, 1750, 152, 1820, 130, 1893, 119],
  [1355, 302, 1470, 290, 1570, 250, 1650, 214, 1750, 177, 1820, 158, 1895, 151],
  [1355, 302, 1500, 284, 1640, 266, 1730, 246, 1830, 229, 1957, 218],
  [1355, 302, 1500, 286, 1640, 262, 1730, 259, 1830, 247, 1920, 244],
  [1355, 302, 1893, 260],
  [1355, 302, 1500, 308, 1660, 319, 1750, 327, 1820, 331, 1904, 332.5],
  [1355, 303, 1500, 315, 1620, 335, 1730, 355, 1800, 364, 1904, 368.5],
  [1700, 262, 1750, 252, 1830, 236, 1920, 226],
  [1455, 338, 1500, 337, 1580, 324, 1680, 298, 1740, 288, 1784, 287],
  [1732, 405, 1750, 400, 1758, 375, 1756, 325, 1765, 298, 1784, 290],
  [1704, 501, 1730, 497, 1743, 460, 1741, 350, 1748, 310, 1784, 293],
  [1498, 561, 1543, 555, 1597, 507, 1630, 443, 1680, 343, 1720, 308, 1750, 300, 1784, 296],
  [1490, 560.5, 1623, 559.5],
  [1640, 559, 1690, 552, 1745, 495, 1773, 410, 1786, 325, 1798, 255, 1812, 220, 1850, 160, 1885, 138, 1922, 133],
  [1640, 559, 1693, 552, 1749, 495, 1776, 410, 1790, 325, 1800, 270],
];

const groupColor: Record<Kind, string> = {
  pink: "bg-[#fcd9ea]",
  green: "bg-[#e0eabb]",
  orange: "bg-[#fee3cd]",
  blue: "bg-[#cdeefe]",
  gray: "bg-[#d9d9d9]",
};

const shortTitles = ["List", "Join", "Point"];
const midTitles = ["Transpose", "Flatten", "Chop List"];
const longTitles = ["List.Create", "List.Transpose", "Points.Sort", "List.Flatten", "Curve.Points"];

function titleFor(kind: NodeKind, w: number, index: number): string {
  if (w < 16) return kind === "w" ? "Code" : shortTitles[index % shortTitles.length];
  if (w < 22) return kind === "w" ? "Round" : midTitles[index % midTitles.length];
  return kind === "w" ? ["Code Block", "Sequence", "Code Block"][index % 3] : longTitles[index % longTitles.length];
}

type Point = [number, number];

function samplePath(p: number[]): Point[] {
  const out: Point[] = [];
  const cubic = (a: Point, b: Point, c: Point, d: Point) => {
    const steps = Math.max(4, Math.ceil(Math.hypot(d[0] - a[0], d[1] - a[1]) * 4));
    for (let i = 0; i <= steps; i++) {
      const t = i / steps;
      const q = 1 - t;
      const k0 = q * q * q;
      const k1 = 3 * q * q * t;
      const k2 = 3 * q * t * t;
      const k3 = t * t * t;
      out.push([k0 * a[0] + k1 * b[0] + k2 * c[0] + k3 * d[0], k0 * a[1] + k1 * b[1] + k2 * c[1] + k3 * d[1]]);
    }
  };
  if (p.length === 4) {
    const [x1, y1, x2, y2] = p;
    const o = 0.45 * Math.hypot(x2 - x1, y2 - y1);
    cubic([x1, y1], [x1 + o, y1], [x2 - o, y2], [x2, y2]);
    return out;
  }
  const n = p.length / 2;
  const at = (i: number): Point => {
    const k = Math.max(0, Math.min(n - 1, i));
    return [p[2 * k], p[2 * k + 1]];
  };
  for (let i = 0; i < n - 1; i++) {
    const [ax, ay] = at(i - 1);
    const [bx, by] = at(i);
    const [cx, cy] = at(i + 1);
    const [dx, dy] = at(i + 2);
    const span = Math.hypot(cx - bx, cy - by) / 3;
    const u = Math.hypot(cx - ax, cy - ay) || 1;
    const v = Math.hypot(dx - bx, dy - by) || 1;
    cubic(
      [bx, by],
      [bx + ((cx - ax) / u) * span, by + ((cy - ay) / u) * span],
      [cx - ((dx - bx) / v) * span, cy - ((dy - by) / v) * span],
      [cx, cy],
    );
  }
  return out;
}

// Draws a connector as runs of dashes whose length follows its slope
function pathFor(p: number[]): string {
  const flat = p.length === 4 && Math.abs(p[3] - p[1]) < 0.5;
  if (flat) {
    const y = Math.floor(p[1]) + 0.5;
    return `M${p[0]} ${y}H${p[2]}`;
  }
  const pts = samplePath(p);
  let d = "";
  let start: Point | null = null;
  let last: Point | null = null;
  let key = "";
  const flush = () => {
    if (start && last) d += `M${start[0].toFixed(2)} ${start[1].toFixed(2)}L${last[0].toFixed(2)} ${last[1].toFixed(2)}`;
    start = null;
    last = null;
  };
  for (let i = 1; i < pts.length; i++) {
    const [x, y] = pts[i];
    const shallow = Math.abs(x - pts[i - 1][0]) >= Math.abs(y - pts[i - 1][1]);
    const minor = shallow ? y : x;
    const cell = Math.floor(minor);
    const on = Math.abs(minor - cell - 0.5) < 0.31;
    const id = `${shallow}${cell}`;
    if (!on || id !== key) flush();
    if (on) {
      const q: Point = shallow ? [x, cell + 0.5] : [cell + 0.5, y];
      if (!start) start = q;
      last = q;
    }
    key = id;
  }
  flush();
  return d;
}

function Port({ dark }: { dark?: boolean }) {
  return (
    <div className={dark ? "h-[2.4px] px-[0.5px] text-[2.2px] leading-[2.4px] text-[#111]" : "h-[2.4px] px-[0.5px] text-[2.2px] leading-[2.4px] text-[#333]"}>
      list
    </div>
  );
}

function GraphNode({ kind, x, y, w, h, index }: { kind: NodeKind; x: number; y: number; w: number; h: number; index: number }) {
  const box = { left: x, top: y, width: w, height: h };
  if (kind === "n") {
    return (
      <div className="absolute whitespace-nowrap bg-[#ececf0] px-px text-[3.2px] leading-[5px] text-[#666]" style={box}>
        Coordinates list for
      </div>
    );
  }
  if (kind === "p") {
    return (
      <div className="absolute flex flex-col bg-[#cfc6c8]" style={box}>
        <div className="flex h-[3.6px] shrink-0 items-center justify-center gap-[0.5px] bg-[#4b4848] text-[2.6px] leading-[3px] text-white">
          <span>Height</span>
          <span className="h-[1.6px] w-[4px] bg-[#c9b878]" />
        </div>
        <div className="flex grow items-center gap-[1px] px-[1px]">
          <span className="text-[2.4px] leading-[3px] text-[#333]">▸ 12</span>
          <span className="h-[2px] grow bg-[#e9e3e4]" />
          <span className="h-[2px] w-[8px] bg-[#dcd5d6]" />
        </div>
      </div>
    );
  }
  if (kind === "o") {
    return (
      <div className="absolute flex flex-col bg-[#c6c2be]" style={box}>
        <div className="h-[3.2px] shrink-0 bg-[#505254] text-center text-[2.4px] leading-[3.2px] text-white">Watch</div>
        <div className="h-[4px] shrink-0 bg-[#d0c8c4]" />
        <div className="mx-[1px] mb-[2px] grow bg-[#e4e2df] px-[2px] text-[2.4px] leading-[4px] text-[#555]">0 : 126.4</div>
      </div>
    );
  }
  const steel = kind === "s";
  const header = steel ? "bg-[#66737b]" : kind === "y" ? "bg-[#7b776c]" : "bg-[#504e4e]";
  const body = steel ? "bg-[#b0bcc4]" : kind === "y" ? "bg-[#e3d3a6]" : "bg-[#c6bfbe]";
  const panel = steel ? "bg-[#d3dbe0]" : kind === "y" ? "bg-[#efe2bd]" : "bg-[#e0d9d9]";
  const ports = Math.max(1, Math.floor((h - 6.2) / 3.1));
  return (
    <div className={`absolute flex flex-col border-b-[0.6px] border-[#8b9196] ${body}`} style={box}>
      <div className={`h-[3.2px] shrink-0 whitespace-nowrap text-center text-[2.4px] leading-[3.2px] text-white ${header}`}>
        {titleFor(kind, w, index)}
      </div>
      <div className="flex shrink-0 items-start justify-between pt-[0.6px]">
        <div className={`flex w-[46%] flex-col gap-[0.6px] ${panel}`}>
          {Array.from({ length: ports }, (_, i) => <Port key={i} dark={i % 2 === 0} />)}
        </div>
        <div className={`w-[30%] text-right ${panel}`}>
          <Port />
        </div>
      </div>
      {h > 8 && <div className="absolute right-[0.6px] bottom-0 text-[2px] leading-[2.4px] text-[#333]">AUTO</div>}
    </div>
  );
}

export default function App() {
  const wires = [
    ...sections.flatMap((s) => s.wires.map((w) => w.map((v, i) => (i % 2 ? s.oy + v / s.sy : s.ox + v / s.sx)))),
    ...longWires,
  ];
  return (
    <main className="relative h-[648px] w-[3171px] overflow-hidden bg-white font-['Open_Sans',sans-serif]">
      {sections.flatMap((s, si) =>
        s.groups.map(([kind, x, y, w, h, title], i) => (
          <section
            key={`${si}-${i}`}
            className={`absolute whitespace-pre pl-[0.5px] text-[4.2px] leading-[5.4px] font-semibold tracking-[-0.25px] text-[#111] ${groupColor[kind]}`}
            style={{ left: s.ox + x / s.sx, top: s.oy + y / s.sy, width: w / s.sx, height: h / s.sy }}
          >
            {title}
          </section>
        )),
      )}
      <svg className="absolute inset-0 h-[648px] w-[3171px]" viewBox="0 0 3171 648" fill="none" stroke="#555555" strokeWidth="0.9">
        {wires.map((w, i) => (
          <path key={i} d={pathFor(w)} />
        ))}
      </svg>
      {sections.flatMap((s, si) =>
        s.nodes.map(([kind, x, y, w, h], i) => (
          <GraphNode key={`${si}-${i}`} kind={kind} x={s.ox + x / s.sx} y={s.oy + y / s.sy} w={w / s.sx} h={h / s.sy} index={i * 5 + si} />
        )),
      )}
    </main>
  );
}
